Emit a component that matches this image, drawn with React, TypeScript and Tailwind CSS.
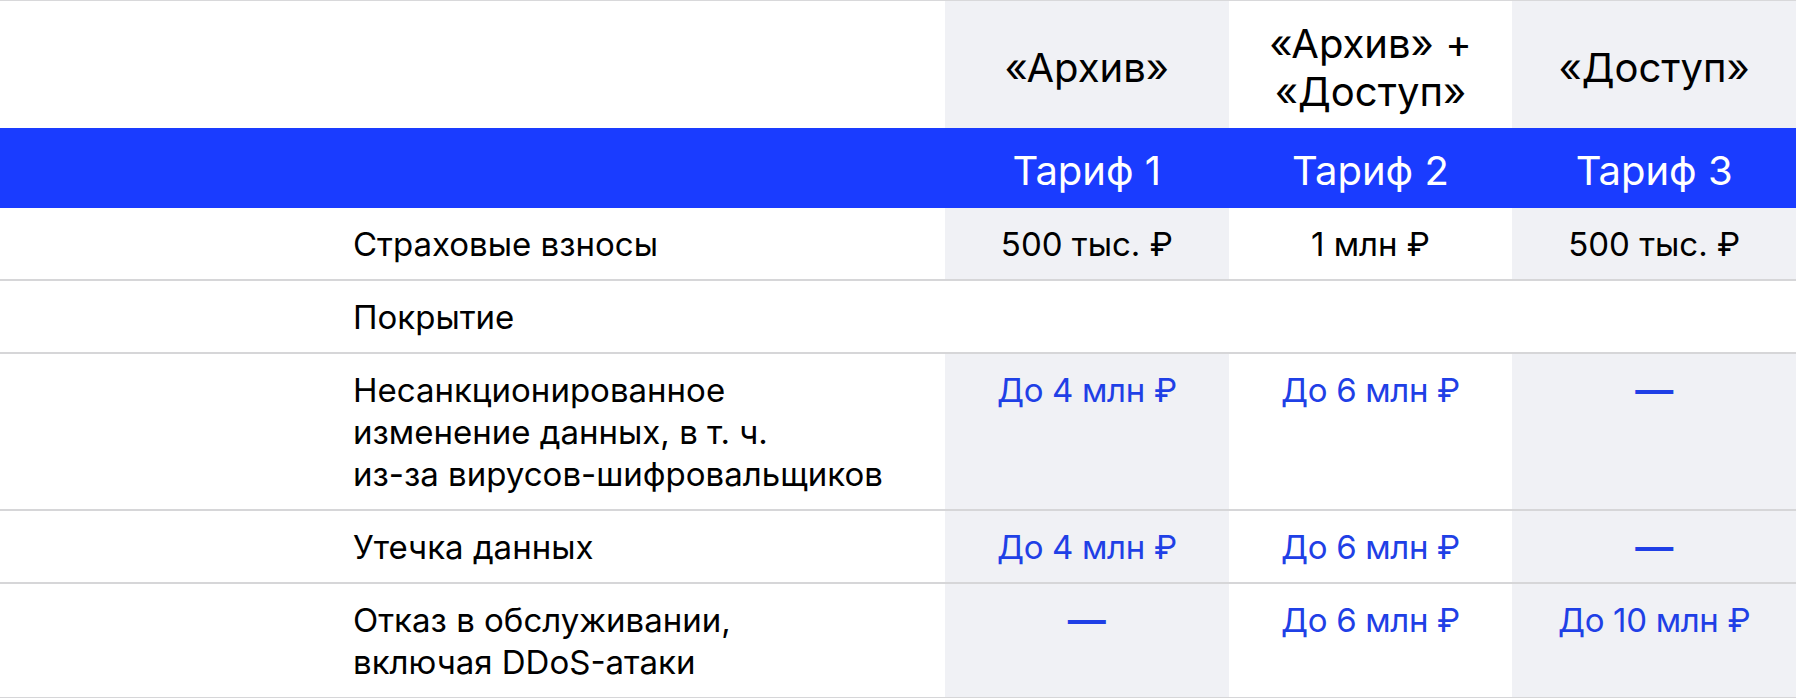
import React from "react";

type Cell = { text: string; blue?: boolean; dash?: boolean };

const rows: { label: string[]; cells: Cell[] | null }[] = [
  {
    label: ["Страховые взносы"],
    cells: [{ text: "500 тыс. ₽" }, { text: "1 млн ₽" }, { text: "500 тыс. ₽" }],
  },
  { label: ["Покрытие"], cells: null },
  {
    label: ["Несанкционированное", "изменение данных, в т. ч.", "из-за вирусов-шифровальщиков"],
    cells: [
      { text: "До 4 млн ₽", blue: true },
      { text: "До 6 млн ₽", blue: true },
      { text: "—", dash: true },
    ],
  },
  {
    label: ["Утечка данных"],
    cells: [
      { text: "До 4 млн ₽", blue: true },
      { text: "До 6 млн ₽", blue: true },
      { text: "—", dash: true },
    ],
  },
  {
    label: ["Отказ в обслуживании,", "включая DDoS-атаки"],
    cells: [
      { text: "—", dash: true },
      { text: "До 6 млн ₽", blue: true },
      { text: "До 10 млн ₽", blue: true },
    ],
  },
];

function ValueCell({ cell, gray }: { cell: Cell; gray: boolean }) {
  return (
    <div
      className={`flex justify-center pt-[15px] pb-[14px] ${gray ? "bg-[#f0f1f5]" : "bg-white"}`}
    >
      {cell.dash ? (
        <span className="text-[38px] leading-[42px] font-semibold text-[#1f3fe6]">—</span>
      ) : (
        <span
          className={`text-[33px] leading-[42px] ${cell.blue ? "text-[#1f40e6] tracking-[-0.01em]" : "text-black"}`}
        >
          {cell.text}
        </span>
      )}
    </div>
  );
}

export default function App() {
  return (
    <div className="w-[1796px] bg-white font-['Inter','Roboto',sans-serif] text-black">
      <div className="h-px bg-[#d8d8da]" />
      {/* header */}
      <div className="grid grid-cols-[945px_1fr_1fr_1fr] h-[127px]">
        <div />
        <div className="flex items-center justify-center bg-[#f0f1f5] pt-[6px] text-center text-[40px] leading-[48px]">
          «Архив»
        </div>
        <div className="flex items-center justify-center bg-white pt-[6px] text-center text-[40px] leading-[48px]">
          <span>
            «Архив» +
            <br />
            «Доступ»
          </span>
        </div>
        <div className="flex items-center justify-center bg-[#f0f1f5] pt-[6px] text-center text-[40px] leading-[48px]">
          «Доступ»
        </div>
      </div>
      {/* blue band */}
      <div className="grid grid-cols-[945px_1fr_1fr_1fr] h-[80px] bg-[#1a3cff] text-white">
        <div />
        {["Тариф 1", "Тариф 2", "Тариф 3"].map((t) => (
          <div
            key={t}
            className="flex items-center justify-center pt-[5px] text-[40px] leading-[48px]"
          >
            {t}
          </div>
        ))}
      </div>
      {/* rows */}
      {rows.map((r, i) => (
        <div
          key={i}
          className="grid grid-cols-[945px_1fr_1fr_1fr] border-b-2 border-[#d6d6d8]"
        >
          <div className="pl-[353px] pt-[15px] pb-[14px] text-[33px] leading-[42px]">
            {r.label.map((l, j) => (
              <div key={j}>{l}</div>
            ))}
          </div>
          {r.cells ? (
            r.cells.map((c, j) => <ValueCell key={j} cell={c} gray={j !== 1} />)
          ) : (
            <>
              <div />
              <div />
              <div />
            </>
          )}
        </div>
      ))}
    </div>
  );
}
